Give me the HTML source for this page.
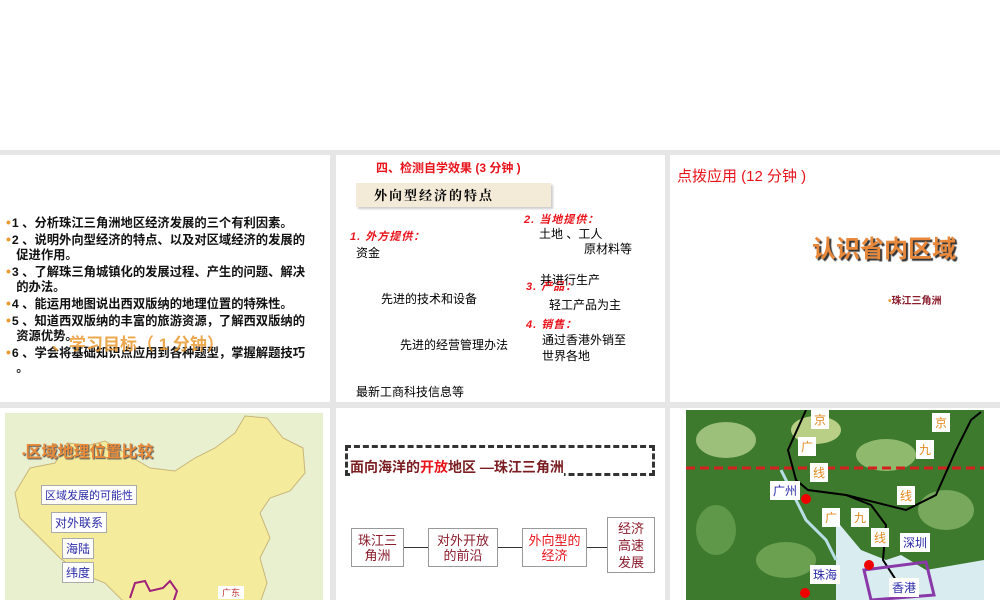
<!DOCTYPE html>
<html><head><meta charset="utf-8"><style>
*{margin:0;padding:0;box-sizing:border-box}
body{width:1000px;height:600px;overflow:hidden;background:#fff;position:relative;font-family:"Liberation Sans","Noto Sans CJK SC",sans-serif}
.bg{position:absolute;left:0;top:150px;width:1000px;height:450px;background:#e6e6e6}
.s{position:absolute;background:#fff;overflow:hidden}
.a{position:absolute;white-space:nowrap}
.b{font-weight:bold}
.red{color:#e8131b}
.hw{font-style:italic;font-weight:bold;color:#e8131b;font-size:11px;letter-spacing:1px}
.box{position:absolute;border:1px solid #999;background:#fff;text-align:center;font-size:13px;line-height:15px}
.lb{position:absolute;background:#fff;color:#2a2aa8;font-size:12px;padding:1px 3px;border:1px solid #aaa}
.ol{position:absolute;background:#fff;color:#e08a20;font-size:12px;padding:1px 3px}
.dot{color:#e89a30;font-size:14px;margin-right:1px}
</style></head><body>
<div class="bg"></div>

<!-- slide 1 -->
<div class="s" style="left:0;top:155px;width:330px;height:247px">
 <div style="position:absolute;left:6px;top:60px;font-size:12.3px;line-height:15.6px;font-weight:bold;color:#111;width:324px">
  <div><span class="dot">•</span>1 、分析珠江三角洲地区经济发展的三个有利因素。</div>
  <div><span class="dot">•</span>2 、说明外向型经济的特点、以及对区域经济的发展的<br>&nbsp;&nbsp;&nbsp;促进作用。</div>
  <div><span class="dot">•</span>3 、了解珠三角城镇化的发展过程、产生的问题、解决<br>&nbsp;&nbsp;&nbsp;的办法。</div>
  <div><span class="dot">•</span>4 、能运用地图说出西双版纳的地理位置的特殊性。</div>
  <div><span class="dot">•</span>5 、知道西双版纳的丰富的旅游资源，了解西双版纳的<br>&nbsp;&nbsp;&nbsp;资源优势。</div>
  <div><span class="dot">•</span>6 、学会将基础知识点应用到各种题型，掌握解题技巧<br>&nbsp;&nbsp;&nbsp;。</div>
 </div>
 <div class="a b" style="left:52px;top:175px;font-size:17px;color:#e89a30;opacity:.85">、学习目标（ 1 分钟）</div>
</div>

<!-- slide 2 -->
<div class="s" style="left:336px;top:155px;width:329px;height:247px">
 <div class="a b red" style="left:40px;top:4px;font-size:12px">四、检测自学效果 (3 分钟 )</div>
 <div class="a" style="left:20px;top:28px;width:195px;height:24px;background:#f3ead8;box-shadow:2px 2px 2px #ccc;font-family:'Noto Serif CJK SC',serif;font-weight:bold;font-size:13px;line-height:24px;padding-left:18px;letter-spacing:2px">外向型经济的特点</div>
 <div class="a hw" style="left:14px;top:73px">1. 外方提供：</div>
 <div class="a" style="left:20px;top:89px;font-size:12px">资金</div>
 <div class="a" style="left:45px;top:135px;font-size:12px">先进的技术和设备</div>
 <div class="a" style="left:64px;top:181px;font-size:12px">先进的经营管理办法</div>
 <div class="a" style="left:20px;top:228px;font-size:12px">最新工商科技信息等</div>
 <div class="a hw" style="left:188px;top:56px">2. 当地提供：</div>
 <div class="a" style="left:203px;top:70px;font-size:12px">土地 、工人</div>
 <div class="a" style="left:248px;top:85px;font-size:12px">原材料等</div>
 <div class="a hw" style="left:190px;top:123px">3. 产品：</div>
 <div class="a" style="left:204px;top:116px;font-size:12px">并进行生产</div>
 <div class="a" style="left:213px;top:141px;font-size:12px">轻工产品为主</div>
 <div class="a hw" style="left:190px;top:161px">4. 销售：</div>
 <div class="a" style="left:206px;top:177px;font-size:12px;line-height:16px">通过香港外销至<br>世界各地</div>
</div>

<!-- slide 3 -->
<div class="s" style="left:670px;top:155px;width:330px;height:247px">
 <div class="a red" style="left:7px;top:10px;font-size:15px">点拨应用 (12 分钟 )</div>
 <div class="a b" style="left:142px;top:74px;font-size:24px;color:#e8883a;text-shadow:2px 2px 1px #333">认识省内区域</div>
 <div class="a b" style="left:218px;top:137px;font-size:10px;color:#8a1c2c"><span style="color:#e89a30">•</span>珠江三角洲</div>
</div>

<!-- slide 4 -->
<div class="s" style="left:0;top:408px;width:330px;height:192px">
 <div class="a" style="left:5px;top:5px;width:318px;height:190px;background:#e9f0cf"></div>
 <svg class="a" style="left:5px;top:5px" width="318" height="190"><path d="M10 80 L25 55 L50 50 L62 30 L85 32 L100 28 L120 40 L145 55 L170 58 L190 45 L210 35 L230 20 L240 3 L262 5 L278 25 L298 35 L300 60 L285 78 L265 85 L255 100 L265 125 L255 145 L262 170 L255 190 L120 190 L100 170 L75 160 L55 145 L35 125 L15 105 Z" fill="#f4ec9c" stroke="#c9b57a" stroke-width="1"/><path d="M125 185 L130 170 L140 168 L145 178 L158 175 L165 168 L172 178 L168 190" fill="none" stroke="#a0207a" stroke-width="2"/></svg>
 <div class="a b" style="left:22px;top:30px;font-size:16px;color:#e88a3a;text-shadow:1px 1px 1px #555"><span style="font-size:10px">•</span>区域地理位置比较</div>
 <div class="lb" style="left:41px;top:77px;font-size:11px">区域发展的可能性</div>
 <div class="lb" style="left:51px;top:104px;font-size:12px">对外联系</div>
 <div class="lb" style="left:62px;top:130px;font-size:12px">海陆</div>
 <div class="lb" style="left:62px;top:154px;font-size:12px">纬度</div>
 <div class="a" style="left:218px;top:178px;background:#fff;color:#c03030;font-size:9px;padding:0 4px">广东</div>
</div>

<!-- slide 5 -->
<div class="s" style="left:336px;top:408px;width:329px;height:192px">
 <div class="a" style="left:9px;top:37px;width:310px;height:31px;border:3px dashed #333"></div>
 <div class="a b" style="left:14px;top:49px;font-size:14px;color:#7a1e22;background:#fff">面向海洋的<span class="red">开放</span>地区 —珠江三角洲</div>
 <div class="box" style="left:15px;top:120px;width:53px;height:39px;padding-top:4px;color:#8a1c2c">珠江三<br>角洲</div>
 <div class="box" style="left:92px;top:120px;width:70px;height:39px;padding-top:4px;color:#8a1c2c">对外开放<br>的前沿</div>
 <div class="box" style="left:186px;top:120px;width:65px;height:39px;padding-top:4px;color:#e8131b">外向型的<br>经济</div>
 <div class="box" style="left:271px;top:109px;width:48px;height:56px;padding-top:2px;color:#8a1c2c;line-height:17px">经济<br>高速<br>发展</div>
 <div class="a" style="left:68px;top:139px;width:24px;border-top:1px solid #333"></div>
 <div class="a" style="left:162px;top:139px;width:24px;border-top:1px solid #333"></div>
 <div class="a" style="left:251px;top:139px;width:20px;border-top:1px solid #333"></div>
</div>

<!-- slide 6 -->
<div class="s" style="left:670px;top:408px;width:330px;height:192px">
 <svg class="a" style="left:16px;top:2px" width="298" height="190">
  <rect width="298" height="190" fill="#3d7a2e"/>
  <ellipse cx="40" cy="30" rx="30" ry="18" fill="#9cc07a"/><ellipse cx="130" cy="20" rx="25" ry="14" fill="#b9cf85"/>
  <ellipse cx="200" cy="45" rx="30" ry="16" fill="#8fb96d"/><ellipse cx="260" cy="100" rx="28" ry="20" fill="#77a85b"/>
  <ellipse cx="30" cy="120" rx="20" ry="25" fill="#5f9848"/><ellipse cx="100" cy="150" rx="30" ry="18" fill="#6aa050"/>
  <path d="M150 110 L175 140 L200 150 L215 145 L240 160 L298 150 L298 190 L150 190 Z" fill="#d9ecf0"/>
  <path d="M95 60 L110 90 L120 110 L140 130 L150 150" stroke="#b8dfe6" stroke-width="3" fill="none"/>
  <path d="M0 58 L298 58" stroke="#d62020" stroke-width="3" stroke-dasharray="9,5"/>
  <path d="M120 0 L102 40 L110 70 L122 80 L160 85 L185 95 L200 115 L197 150 L210 170" stroke="#000" stroke-width="2" fill="none"/>
  <path d="M160 85 L220 100 L250 85 L270 40 L285 10 L295 2" stroke="#000" stroke-width="2" fill="none"/>
  <path d="M178 160 L240 152 L248 185 L185 190 Z" fill="none" stroke="#8a3aa8" stroke-width="3"/>
  <circle cx="120" cy="89" r="5" fill="#e00"/><circle cx="183" cy="155" r="5" fill="#e00"/><circle cx="119" cy="183" r="5" fill="#e00"/>
 </svg>
 <div class="ol" style="left:141px;top:2px">京</div><div class="ol" style="left:262px;top:5px">京</div>
 <div class="ol" style="left:128px;top:29px">广</div><div class="ol" style="left:246px;top:32px">九</div>
 <div class="ol" style="left:140px;top:55px">线</div><div class="ol" style="left:227px;top:78px">线</div>
 <div class="ol" style="left:152px;top:100px">广</div><div class="ol" style="left:181px;top:100px">九</div>
 <div class="ol" style="left:201px;top:120px">线</div>
 <div class="lb" style="left:100px;top:73px;border:none">广州</div>
 <div class="lb" style="left:230px;top:125px;border:none">深圳</div>
 <div class="lb" style="left:140px;top:157px;border:none">珠海</div>
 <div class="lb" style="left:219px;top:170px;border:none">香港</div>
</div>
</body></html>
